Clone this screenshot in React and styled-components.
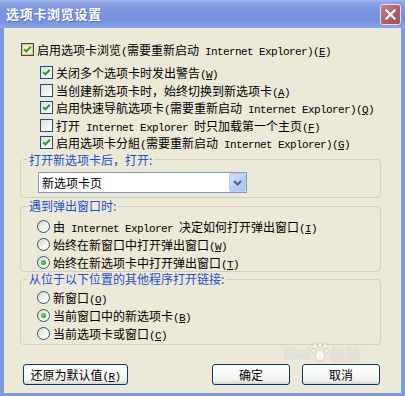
import React from 'react';
import styled, {createGlobalStyle} from 'styled-components';

const GlobalStyle = createGlobalStyle`
  html, body {
    margin: 0;
    padding: 0;
    background: #ECE9D8;
  }
  body {
    font-family: "Noto Sans CJK SC", sans-serif;
    font-size: 12px;
    color: #000;
  }
`;

const Window = styled.div`
  position: relative;
  width: 405px;
  height: 396px;
  display: flex;
  flex-direction: column;
  background: #7F9AE0;
  overflow: hidden;
`;

const TitleBar = styled.div`
  flex: none;
  height: 28px;
  display: flex;
  align-items: flex-start;
  justify-content: space-between;
  padding: 0 4px 0 6px;
  box-sizing: border-box;
  background: linear-gradient(#A6B9EE 0, #8AA3E4 3px, #7C97DF 35%, #7792DD 75%, #8CA5E5 100%);
`;

const Title = styled.div`
  margin-top: 5px;
  color: #fff;
  font-weight: bold;
  font-size: 13px;
  line-height: 18px;
  letter-spacing: 0.7px;
  text-shadow: 1px 1px 0 rgba(50, 70, 140, 0.45);
`;

const CloseButton = styled.div`
  margin-top: 4px;
  width: 21px;
  height: 21px;
  box-sizing: border-box;
  border: 1px solid #E9DCE2;
  border-radius: 3px;
  background: linear-gradient(135deg, #C77F88, #AE5B67 60%, #A45260);
  display: flex;
  align-items: center;
  justify-content: center;
`;

const Body = styled.div`
  flex: 1;
  margin: 0 4px 3px 4px;
  padding-top: 12px;
  background: #ECE9D8;
  display: flex;
  flex-direction: column;
`;

const Latin = styled.span`
  font-family: "Liberation Mono", monospace;
  font-size: 11px;
  letter-spacing: -0.6px;
`;

const Key = styled.span`
  text-decoration: underline;
`;

const CheckRow = styled.div`
  display: flex;
  align-items: center;
  gap: 3px;
  height: ${p => p.$h}px;
  white-space: nowrap;
`;

const MainOption = styled.div`
  padding-left: 17px;
`;

const SubList = styled.div`
  margin-top: 6px;
  padding-left: 36px;
  display: flex;
  flex-direction: column;
`;

const Box = styled.span`
  flex: none;
  width: 13px;
  height: 13px;
  box-sizing: border-box;
  border: 1px solid #1C5180;
  background: linear-gradient(135deg, #DCDCD7, #F4F4F1 60%, #FFFFFF);
  box-shadow: ${p => p.$hot ? 'inset 0 0 0 1px #F9C35A, inset 0 0 0 2px #FDE3A6' : 'none'};
  display: flex;
  align-items: center;
  justify-content: center;
`;

const Round = styled.span`
  flex: none;
  width: 13px;
  height: 13px;
  box-sizing: border-box;
  border: 1px solid #2F5378;
  border-radius: 50%;
  background: linear-gradient(135deg, #D8D8D2, #F2F2EE 55%, #FFFFFF);
  display: flex;
  align-items: center;
  justify-content: center;
`;

const Dot = styled.span`
  width: 5px;
  height: 5px;
  border-radius: 50%;
  background: radial-gradient(circle at 40% 40%, #7BD67B, #21A121 70%);
`;

const Group = styled.fieldset`
  margin: ${p => p.$mt}px 20px 0 16px;
  padding: 0;
  min-width: 0;
  border: 1px solid #D0D0BF;
  border-radius: 4px;
`;

const Legend = styled.legend`
  margin-left: 6px;
  padding: 0 2px;
  color: #1E4FC8;
  font-size: 12px;
  line-height: 14px;
`;

const GroupInner = styled.div`
  padding: ${p => p.$pt}px 0 ${p => p.$pb}px 16px;
  display: flex;
  flex-direction: column;
`;

const Select = styled.div`
  margin-left: 1px;
  width: 209px;
  height: 21px;
  box-sizing: border-box;
  border: 1px solid #7F9DB9;
  background: #fff;
  display: flex;
  align-items: center;
  justify-content: space-between;
  padding: 0 0 0 3px;
`;

const SelectText = styled.span`
  line-height: 19px;
`;

const SelectArrow = styled.span`
  width: 17px;
  height: 19px;
  box-sizing: border-box;
  border: 1px solid #BACCF5;
  border-radius: 2px;
  background: linear-gradient(135deg, #D5E2FD, #B7CBF7 60%, #A9C0F3);
  display: flex;
  align-items: center;
  justify-content: center;
`;

const ButtonRow = styled.div`
  margin-top: 19px;
  padding: 0 21px 0 19px;
  display: flex;
  gap: 12px;
`;

const Button = styled.button`
  width: ${p => p.$w}px;
  height: 21px;
  margin-left: ${p => p.$push ? 'auto' : '0'};
  padding: 0;
  box-sizing: border-box;
  border: 1px solid #003C74;
  border-radius: 3px;
  background: linear-gradient(#FFFFFF, #F3F3EF 80%, #D8D4CA);
  font-family: "Noto Sans CJK SC", sans-serif;
  font-size: 12px;
  color: #000;
  white-space: nowrap;
`;

const Watermark = styled.div`
  position: absolute;
  left: 284px;
  top: 342px;
  display: flex;
  align-items: flex-end;
  gap: 1px;
  color: rgba(255, 255, 255, 0.6);
  text-shadow: 0 0 1px rgba(140, 140, 140, 0.55);
  font-family: "Liberation Sans", sans-serif;
  font-size: 17px;
  font-weight: bold;
  line-height: 20px;
  pointer-events: none;
`;

const WatermarkCjk = styled.span`
  font-family: "Noto Sans CJK SC", sans-serif;
  font-size: 15px;
`;

const Txt = ({children}) =>
  children.split(/([ -~]+)/).filter(Boolean).map((s, i) =>
    /^[ -~]+$/.test(s) ? <Latin key={i}>{s}</Latin> : <span key={i}>{s}</span>
  );

const Label = ({text, k}) => (
  <span>
    <Txt>{text}</Txt>
    <Latin>(<Key>{k}</Key>)</Latin>
  </span>
);

const CheckMark = () => (
  <svg width="9" height="9" viewBox="0 0 9 9">
    <path d="M1.2 4.2 L3.4 6.4 L7.8 1.8" fill="none" stroke="#21A121" strokeWidth="2" />
  </svg>
);

const Paw = () => (
  <svg width="18" height="22" viewBox="0 0 18 22">
    <g fill="rgba(255,255,255,0.65)" stroke="rgba(140,140,140,0.5)" strokeWidth="0.6">
      <ellipse cx="4" cy="4" rx="2" ry="2.6" />
      <ellipse cx="9" cy="2.8" rx="2" ry="2.6" />
      <ellipse cx="14" cy="4" rx="2" ry="2.6" />
      <ellipse cx="2.4" cy="9" rx="1.8" ry="2.3" />
      <ellipse cx="15.6" cy="9" rx="1.8" ry="2.3" />
      <path d="M9 8 C5 8 3.5 13 4.5 16 C5.5 19 12.5 19 13.5 16 C14.5 13 13 8 9 8 Z" />
    </g>
  </svg>
);

const Checkbox = ({checked, hot, text, k, h}) => (
  <CheckRow $h={h}>
    <Box $hot={hot}>{checked && <CheckMark />}</Box>
    <Label text={text} k={k} />
  </CheckRow>
);

const Radio = ({checked, text, k}) => (
  <CheckRow $h={18}>
    <Round>{checked && <Dot />}</Round>
    <Label text={text} k={k} />
  </CheckRow>
);

const subOptions = [
  {text: '关闭多个选项卡时发出警告', k: 'W', checked: true},
  {text: '当创建新选项卡时，始终切换到新选项卡', k: 'A', checked: false},
  {text: '启用快速导航选项卡(需要重新启动 Internet Explorer)', k: 'Q', checked: true},
  {text: '打开 Internet Explorer 时只加载第一个主页', k: 'F', checked: false},
  {text: '启用选项卡分組(需要重新启动 Internet Explorer)', k: 'G', checked: true},
];

const popupOptions = [
  {text: '由 Internet Explorer 决定如何打开弹出窗口', k: 'I', checked: false},
  {text: '始终在新窗口中打开弹出窗口', k: 'W', checked: false},
  {text: '始终在新选项卡中打开弹出窗口', k: 'T', checked: true},
];

const linkOptions = [
  {text: '新窗口', k: 'O', checked: false},
  {text: '当前窗口中的新选项卡', k: 'B', checked: true},
  {text: '当前选项卡或窗口', k: 'C', checked: false},
];

export default function App() {
  return (
    <>
      <GlobalStyle />
      <Window>
        <TitleBar>
          <Title>选项卡浏览设置</Title>
          <CloseButton>
            <svg width="11" height="11" viewBox="0 0 11 11">
              <path d="M1.5 1.5 L9.5 9.5 M9.5 1.5 L1.5 9.5" stroke="#fff" strokeWidth="2.2" strokeLinecap="square" />
            </svg>
          </CloseButton>
        </TitleBar>
        <Body>
          <MainOption>
            <Checkbox checked hot h={18} text="启用选项卡浏览(需要重新启动 Internet Explorer)" k="E" />
          </MainOption>
          <SubList>
            {subOptions.map(o => (
              <Checkbox key={o.k} h={17.5} {...o} />
            ))}
          </SubList>

          <Group $mt={1}>
            <Legend>打开新选项卡后，打开:</Legend>
            <GroupInner $pt={5.5} $pb={4}>
              <Select>
                <SelectText>新选项卡页</SelectText>
                <SelectArrow>
                  <svg width="9" height="6" viewBox="0 0 9 6">
                    <path d="M1 1 L4.5 4.5 L8 1" fill="none" stroke="#4D6185" strokeWidth="2" />
                  </svg>
                </SelectArrow>
              </Select>
            </GroupInner>
          </Group>

          <Group $mt={1}>
            <Legend>遇到弹出窗口时:</Legend>
            <GroupInner $pt={4} $pb={0}>
              {popupOptions.map(o => (
                <Radio key={o.k} {...o} />
              ))}
            </GroupInner>
          </Group>

          <Group $mt={0}>
            <Legend>从位于以下位置的其他程序打开链接:</Legend>
            <GroupInner $pt={2} $pb={2}>
              {linkOptions.map(o => (
                <Radio key={o.k} {...o} />
              ))}
            </GroupInner>
          </Group>

          <ButtonRow>
            <Button $w={105}><Label text="还原为默认值" k="R" /></Button>
            <Button $w={78} $push>确定</Button>
            <Button $w={78}>取消</Button>
          </ButtonRow>
        </Body>
        <Watermark>
          Bai<Paw /><WatermarkCjk>经验</WatermarkCjk>
        </Watermark>
      </Window>
    </>
  );
}
